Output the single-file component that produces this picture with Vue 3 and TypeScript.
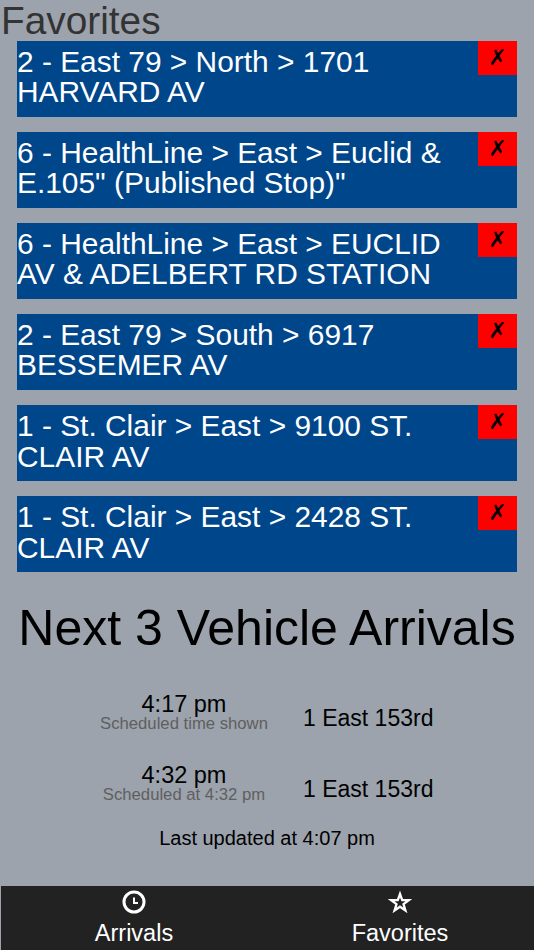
<script setup lang="ts">
const favorites: string[] = [
  '2 - East 79 > North > 1701 HARVARD AV',
  '6 - HealthLine > East > Euclid & E.105" (Published Stop)"',
  '6 - HealthLine > East > EUCLID AV & ADELBERT RD STATION',
  '2 - East 79 > South > 6917 BESSEMER AV',
  '1 - St. Clair > East > 9100 ST. CLAIR AV',
  '1 - St. Clair > East > 2428 ST. CLAIR AV',
]
const arrivals = [
  { time: '4:17 pm', note: 'Scheduled time shown', dest: '1 East 153rd' },
  { time: '4:32 pm', note: 'Scheduled at 4:32 pm', dest: '1 East 153rd' },
]
</script>

<template>
  <div class="page">
    <h1 class="heading">Favorites</h1>
    <ul class="favorites">
      <li v-for="f in favorites" :key="f" class="card">
        <button class="remove" type="button">✗</button>
        {{ f }}
      </li>
    </ul>
    <h2 class="title">Next 3 Vehicle Arrivals</h2>
    <div class="arrivals">
      <div v-for="a in arrivals" :key="a.time" class="arrival">
        <div class="when">
          <div class="time">{{ a.time }}</div>
          <div class="note">{{ a.note }}</div>
        </div>
        <div class="dest">{{ a.dest }}</div>
      </div>
    </div>
    <p class="updated">Last updated at 4:07 pm</p>
    <nav class="tabs">
      <div class="tab">
        <svg class="icon" viewBox="0 0 24 24" width="24" height="24" fill="none" stroke="#fff">
          <circle cx="12" cy="12" r="10" stroke-width="3" />
          <path d="M12 7.5V13H16" stroke-width="2" />
        </svg>
        <span>Arrivals</span>
      </div>
      <div class="tab">
        <svg class="icon" viewBox="0 0 24 24" width="24" height="24" fill="none" stroke="#fff">
          <path d="M12 4L14.2 10.2H20.8L15.5 14.2L17.4 20.4L12 16.7L6.6 20.4L8.5 14.2L3.2 10.2H9.8Z" stroke-width="2.3" />
        </svg>
        <span>Favorites</span>
      </div>
    </nav>
  </div>
</template>

<style>
html, body { margin: 0; padding: 0; }
</style>

<style scoped>
.page {
  width: 534px;
  height: 950px;
  display: flex;
  flex-direction: column;
  background: #9ca3ad;
  font-family: "Liberation Sans", Arial, sans-serif;
  overflow: hidden;
}
.heading {
  margin: 0;
  padding: 0 0 0 1px;
  font-size: 38.8px;
  font-weight: 400;
  line-height: 41px;
  color: #333;
}
.favorites {
  list-style: none;
  margin: 0;
  padding: 0 17px;
  display: flex;
  flex-direction: column;
  gap: 15.4px;
}
.card {
  background: #00468b;
  color: #fff;
  font-size: 29.9px;
  line-height: 30.6px;
  min-height: 75.7px;
  padding: 5.6px 0 7.4px;
  box-sizing: border-box;
}
.remove {
  float: right;
  width: 39px;
  height: 34px;
  margin-top: -5.6px;
  padding: 0;
  border: 0;
  background: #f00;
  color: #000;
  font-family: "DejaVu Sans", sans-serif;
  font-size: 22px;
  line-height: 34px;
}
.title {
  margin: 28px 0 0;
  text-align: center;
  font-size: 50px;
  font-weight: 400;
  line-height: 57px;
  color: #000;
}
.arrivals {
  margin-top: 34px;
  display: flex;
  flex-direction: column;
  gap: 30px;
}
.arrival {
  display: flex;
  align-items: center;
}
.when {
  width: 200px;
  margin-left: 84px;
  text-align: center;
}
.time {
  font-size: 23.5px;
  line-height: 24px;
  color: #000;
}
.note {
  font-size: 16.7px;
  line-height: 16px;
  color: #5f5f5f;
}
.dest {
  margin-left: 19px;
  padding-top: 14px;
  font-size: 23px;
  color: #000;
}
.updated {
  margin: 23px 0 0;
  text-align: center;
  font-size: 20px;
  line-height: 24px;
  color: #000;
}
.tabs {
  margin-top: auto;
  height: 64px;
  margin-left: 1px;
  padding-right: 1px;
  background: #222;
  display: flex;
}
.tab {
  flex: 1;
  display: flex;
  flex-direction: column;
  align-items: center;
  color: #fff;
  font-size: 23.5px;
  line-height: 26px;
  padding-top: 4px;
  gap: 6px;
}
.icon { display: block; }
</style>
